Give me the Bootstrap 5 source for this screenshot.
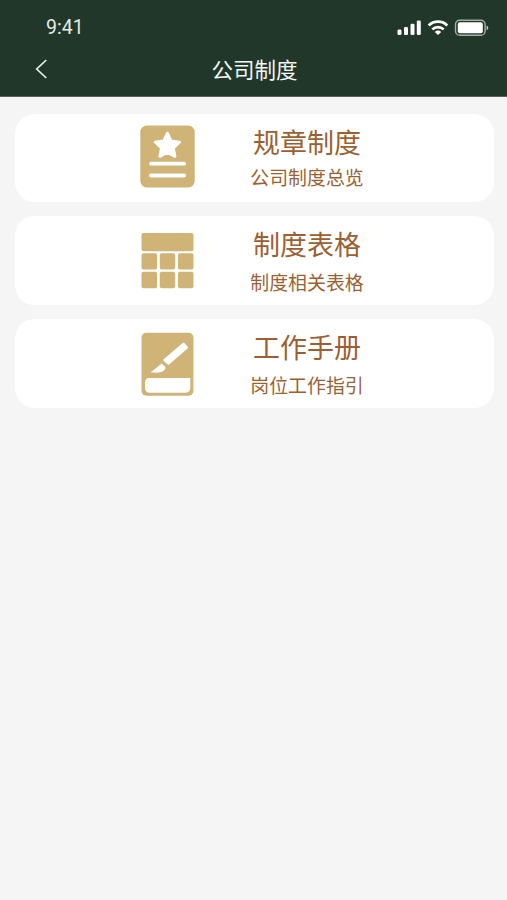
<!DOCTYPE html>
<html lang="zh-CN">
<head>
<meta charset="utf-8">
<meta name="viewport" content="width=device-width, initial-scale=1">
<title>公司制度</title>
<link href="https://cdn.jsdelivr.net/npm/bootstrap@5.3.0/dist/css/bootstrap.min.css" rel="stylesheet">
<style>
body { background: #f5f5f5; font-family: "Noto Sans CJK SC", sans-serif; }
.app-head { background: #20372a; height: 97px; color: #f3f8f4; border-bottom: 1px solid #56655c; }
.status-bar { height: 54px; padding: 1px 18px 0 46px; }
.clock { font: 400 19.5px/22px Roboto, sans-serif; color: #e3ece5; }
.title-bar { height: 42px; padding: 0 32px 0 34px; }
.page-title { font-size: 21.5px; line-height: 29px; font-weight: 400; }
.side { width: 24px; }
.entries { padding: 16.5px 13.5px 0 14.5px; gap: 14px; }
.entry { height: 88.7px; border-radius: 20px; gap: 55px; color: #9c5f33; padding-right: 5px; }
.entry:hover { color: #9c5f33; }
.entry-name { font-size: 27px; line-height: 34px; }
.entry-note { font-size: 18.9px; line-height: 24px; margin-top: 9px; }
.entry-text { width: 114px; white-space: nowrap; }
.entry-text.snug { padding-bottom: 2px; }
.entry-text.snug .entry-note { margin-top: 6px; }
</style>
</head>
<body>
<header class="app-head">
  <div class="status-bar d-flex justify-content-between align-items-center">
    <span class="clock">9:41</span>
    <svg width="93" height="20" viewBox="396 18.6 93 20" fill="#fff">
      <rect x="397.5" y="30" width="4" height="5.6" rx="1.3"/>
      <rect x="404" y="27.5" width="4" height="8.1" rx="1.3"/>
      <rect x="410.5" y="24.3" width="4" height="11.3" rx="1.3"/>
      <rect x="416.8" y="21" width="4" height="14.6" rx="1.3"/>
      <g fill="none" stroke="#fff" stroke-width="2.6">
        <path d="M428.7 26.1a13.2 13.2 0 0 1 18.6 0"/>
        <path d="M432.3 30a8.2 8.2 0 0 1 11.4 0"/>
      </g>
      <path d="M438 35.6l-3.2-3.1a4.6 4.6 0 0 1 6.4 0z"/>
      <rect x="455.5" y="20.8" width="29.6" height="15" rx="4.3" fill="none" stroke="#a3afa7" stroke-width="1.4"/>
      <rect x="457.8" y="22.8" width="25" height="11" rx="2"/>
      <path d="M486.6 26v4.8q1.7-.8 1.7-2.4t-1.7-2.4z" fill="#c5cdc8"/>
    </svg>
  </div>
  <div class="title-bar d-flex justify-content-between align-items-start">
    <a href="#" class="side d-flex" aria-label="返回">
      <svg width="14" height="30" viewBox="0 0 14 30" fill="none" stroke="#e6efe8" stroke-width="1.7"><path d="M12.3 6L2.7 15l9.6 9"/></svg>
    </a>
    <h1 class="page-title m-0">公司制度</h1>
    <span class="side"></span>
  </div>
</header>
<main class="entries d-flex flex-column">
  <a href="#" class="entry bg-white d-flex justify-content-center align-items-center text-decoration-none">
    <svg width="56" height="88" viewBox="139 114 56 88">
      <rect x="140.3" y="125.5" width="54.4" height="62" rx="6.5" fill="#cfb377"/>
      <path d="M167.4 133.2l3.7 7.7 8.6 1.2-6.3 6 1.6 8.3-7.6-4-7.6 4 1.6-8.3-6.3-6 8.6-1.2z" fill="#fff" stroke="#fff" stroke-width="2.8" stroke-linejoin="round"/>
      <path d="M151 163.7h33.2M151 175.5h33.2" stroke="#fff" stroke-width="3.8" stroke-linecap="round"/>
    </svg>
    <span class="entry-text snug d-flex flex-column align-items-center">
      <span class="entry-name">规章制度</span><span class="entry-note">公司制度总览</span>
    </span>
  </a>
  <a href="#" class="entry bg-white d-flex justify-content-center align-items-center text-decoration-none">
    <svg width="56" height="88" viewBox="139 217 56 88" fill="#cfb377">
      <rect x="141.5" y="233" width="52" height="18.3" rx="2"/>
      <rect x="141.5" y="253.2" width="15.6" height="16.4" rx="2"/>
      <rect x="159.8" y="253.2" width="15.4" height="16.4" rx="2"/>
      <rect x="178" y="253.2" width="15.5" height="16.4" rx="2"/>
      <rect x="141.5" y="271.8" width="15.6" height="16.4" rx="2"/>
      <rect x="159.8" y="271.8" width="15.4" height="16.4" rx="2"/>
      <rect x="178" y="271.8" width="15.5" height="16.4" rx="2"/>
    </svg>
    <span class="entry-text d-flex flex-column align-items-center">
      <span class="entry-name">制度表格</span><span class="entry-note">制度相关表格</span>
    </span>
  </a>
  <a href="#" class="entry bg-white d-flex justify-content-center align-items-center text-decoration-none">
    <svg width="56" height="88" viewBox="139 319.5 56 88">
      <rect x="141.5" y="333.2" width="52" height="63" rx="5" fill="#cfb377"/>
      <g fill="#fff">
        <path d="M149 378.5h41.3v9.5q0 5.3-5.3 5.3h-35q-5 0-5-5v-4.8q0-5 4-5z"/>
        <path d="M183 343.300q.8-.6 1.400.1l3.600 4.100q.5.700-.1 1.300l-18.800 16.300q-.7.500-1.300 0l-4.500-3.900q-.6-.7 0-1.300z"/>
        <path d="M161.800 363.900l3.400 3.400q.8 1.500-.6 3.300-2 2.300-6.400 2.500-4 .2-7.700-.3 6.300-4.700 11.300-8.900z"/>
      </g>
    </svg>
    <span class="entry-text d-flex flex-column align-items-center">
      <span class="entry-name">工作手册</span><span class="entry-note">岗位工作指引</span>
    </span>
  </a>
</main>
<script src="https://cdn.jsdelivr.net/npm/bootstrap@5.3.0/dist/js/bootstrap.bundle.min.js"></script>
</body>
</html>
